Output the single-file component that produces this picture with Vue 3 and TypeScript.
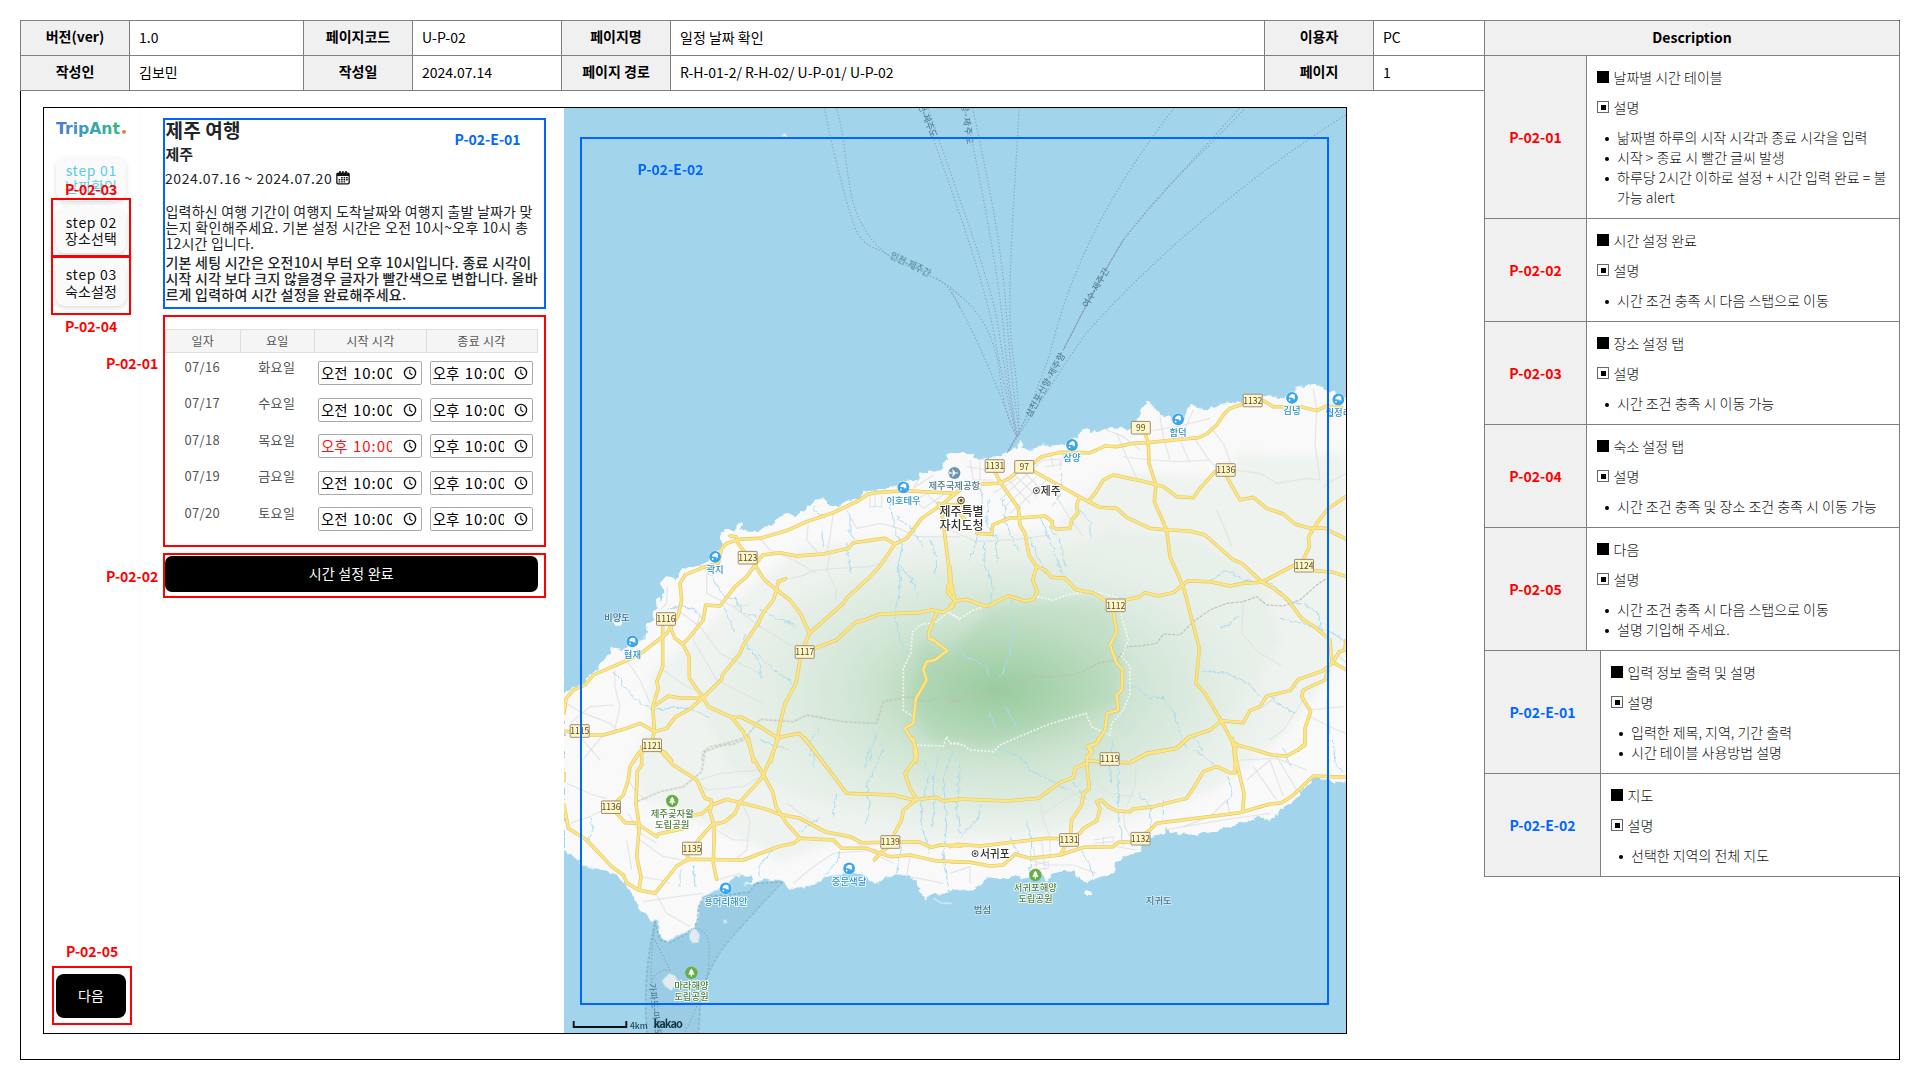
<script setup lang="ts">
interface Spec { code: string; title: string; items: string[]; edge?: boolean; height: number }
interface Line { o: 'N' | 'E' | 'S' | 'T' | 'U' | 'V'; d: string }
interface Label { x: number; y: number; t: string }

const metaRows: string[][] = [
  ['버전(ver)', '1.0', '페이지코드', 'U-P-02', '페이지명', '일정 날짜 확인', '이용자', 'PC'],
  ['작성인', '김보민', '작성일', '2024.07.14', '페이지 경로', 'R-H-01-2/ R-H-02/ U-P-01/ U-P-02', '페이지', '1'],
]

const specs: Spec[] = [
  { code: 'P-02-01', title: '날짜별 시간 테이블', height: 163, items: ['낢짜별 하루의 시작 시각과 종료 시각을 입력', '시작 > 종료 시 빨간 글씨 발생', '하루당 2시간 이하로 설정 + 시간 입력 완료 = 불가능 alert'] },
  { code: 'P-02-02', title: '시간 설정 완료', height: 103, items: ['시간 조건 충족 시 다음 스탭으로 이동'] },
  { code: 'P-02-03', title: '장소 설정 탭', height: 103, items: ['시간 조건 충족 시 이동 가능'] },
  { code: 'P-02-04', title: '숙소 설정 탭', height: 103, items: ['시간 조건 충족 및 장소 조건 충족 시 이동 가능'] },
  { code: 'P-02-05', title: '다음', height: 123, items: ['시간 조건 충족 시 다음 스탭으로 이동', '설명 기입해 주세요.'] },
  { code: 'P-02-E-01', title: '입력 정보 출력 및 설명', height: 123, edge: true, items: ['입력한 제목, 지역, 기간 출력', '시간 테이블 사용방법 설명'] },
  { code: 'P-02-E-02', title: '지도', height: 103, edge: true, items: ['선택한 지역의 전체 지도'] },
]

const steps = [
  { n: 'step 01', t: '날짜확인', on: true },
  { n: 'step 02', t: '장소선택', on: false },
  { n: 'step 03', t: '숙소설정', on: false },
]

const days = [
  { d: '07/16', w: '화요일', s: '오전', bad: false },
  { d: '07/17', w: '수요일', s: '오전', bad: false },
  { d: '07/18', w: '목요일', s: '오후', bad: true },
  { d: '07/19', w: '금요일', s: '오전', bad: false },
  { d: '07/20', w: '토요일', s: '오전', bad: false },
]

/* Map tiles: each tile has its own origin and is drawn at three units per pixel. */
const origin: Record<Line['o'], string> = {
  N: 'translate(560 440) scale(.33333)',
  E: 'translate(950 400) scale(.33333)',
  S: 'translate(560 740) scale(.33333)',
  T: 'translate(950 740) scale(.33333)',
  U: 'translate(560 100) scale(.33333)',
  V: 'translate(950 100) scale(.33333)',
}

const land: Line[] = [
  { o: 'N', d: '12,760 30,745 62,736 78,722 90,700 115,690 125,660 150,640 152,620 180,630 210,620 240,600 262,585 266,562 258,550 280,535 275,515 290,505 288,478 300,470 303,490 310,460 303,425 318,412 350,418 362,390 385,382 430,375 450,355 480,330 485,305 480,285 495,268 515,268 528,272 530,255 550,250 538,264 560,275 590,275 620,260 645,250 655,230 680,222 710,225 735,210 765,180 790,175 800,182 800,195 830,200 850,185 905,172 910,155 950,155 1000,140 1040,122 1080,118 1078,95 1100,98 1150,85 1152,62 1175,45 1200,38 1240,40 1240,970 12,970' },
  { o: 'E', d: '-10,165 0,160 30,160 50,176 80,177 105,172 150,168 175,155 205,140 208,122 218,126 218,142 235,150 250,148 280,130 305,140 340,135 380,112 385,100 410,84 440,97 480,85 520,80 530,92 545,85 560,60 575,30 590,5 600,12 620,28 635,45 660,50 685,75 705,55 712,25 722,15 740,18 760,30 790,20 860,5 890,0 940,-8 950,-12 1000,-5 1035,-25 1040,-42 1060,-40 1080,-48 1110,-42 1125,-30 1150,-25 1165,-10 1200,0 1200,1060 -10,1060' },
  { o: 'S', d: '12,330 50,355 65,372 100,387 165,400 195,430 215,455 220,480 240,500 250,520 275,545 295,538 300,590 325,608 345,590 380,575 405,560 415,530 415,500 430,470 470,450 520,415 545,405 570,408 575,425 550,435 580,430 610,420 660,420 685,445 740,440 770,430 800,410 840,405 865,395 905,402 945,435 980,412 1020,403 1050,410 1070,430 1095,478 1115,465 1150,462 1180,450 1215,452 1215,-10 12,-10' },
  { o: 'T', d: '0,455 30,450 60,452 90,440 110,408 150,418 200,405 215,418 240,412 275,400 290,430 305,398 330,392 375,395 385,415 410,430 440,415 490,400 495,370 520,350 570,335 572,305 600,290 640,280 648,262 660,275 710,285 800,275 850,255 900,240 930,228 960,242 985,225 990,205 1030,185 1060,150 1090,115 1130,120 1180,128 1200,125 1200,-100 0,-100' },
  { o: 'N', d: '152,545 162,550 170,558 182,556 190,545 185,535 160,538' },
  { o: 'T', d: '403,455 412,450 425,457 423,465 408,464' },
  { o: 'U', d: '668,104 676,101 683,108 675,111' },
]

const roads: Line[] = [
  { o: 'N', d: '12,820 18,775 40,750 75,735 100,705 215,655 250,635 320,580 355,525 365,480 360,430 375,405 435,380 475,370 485,325 500,310 540,298 600,295 680,272 740,245 820,218 890,185 925,162 960,157 1040,152 1180,160' },
  { o: 'N', d: '510,288 528,290 535,312 585,375 612,418 650,450 690,480 722,522 748,580' },
  { o: 'N', d: '308,560 308,680 290,725 295,745 278,800 283,870 275,915' },
  { o: 'N', d: '330,560 345,595 368,612 388,650 388,715 428,772 445,800 515,832 550,875 570,920 580,965' },
  { o: 'N', d: '368,612 390,590 430,540 437,495 480,498 525,440 560,410 585,375 608,345 660,338 710,348 790,342 865,325 880,308 975,295 1005,312' },
  { o: 'N', d: '677,416 655,425 650,450 640,480 605,525 595,550 550,615 540,640 487,705 485,718 430,772 390,807 345,832 320,865 285,875 240,850 200,865 130,885 90,885 12,873' },
  { o: 'N', d: '280,800 325,768 365,775 430,775' },
  { o: 'N', d: '1202,148 1150,190 1085,235 1040,295 1005,312 960,378 930,410 860,475 850,490 748,580 733,615 720,660 708,730 675,790 665,830 652,895 632,965' },
  { o: 'N', d: '765,625 830,600 885,548 915,540 960,522 1080,518 1115,510 1150,517 1178,500 1185,482 1162,458 1165,435 1178,440 1172,460 1165,370 1155,290 1145,210 1135,190' },
  { o: 'N', d: '1130,518 1105,580 1108,597 1120,600 1162,632 1125,660 1100,665 1090,688 1100,720 1068,775 1060,850 1035,865 1065,915 1063,935 1070,965' },
  { o: 'N', d: '515,832 545,832 600,860 652,893 718,880 750,915 788,965' },
  { o: 'N', d: '275,915 240,935 220,965' },
  { o: 'N', d: '300,930 315,938 335,962' },
  { o: 'N', d: '1135,193 1202,195' },
  { o: 'E', d: '0,292 30,270' },
  { o: 'E', d: '95,252 150,250 185,230 200,215 250,190 275,170 330,157 420,158 440,150 465,138 500,140 550,130 590,128 700,117 745,113 770,102 800,75 820,45 840,25 880,12' },
  { o: 'E', d: '940,2 970,20 1050,20 1100,32 1130,18 1175,22' },
  { o: 'E', d: '250,213 415,305 450,322 500,325 530,352 600,385 650,390 720,393 765,405 850,480 875,490 935,545 970,565 1010,595 1055,655 1100,685 1140,720 1145,785 1190,810' },
  { o: 'E', d: '415,305 435,280 460,240 490,225 575,243 610,252 640,260 680,290 730,293 750,265 795,215' },
  { o: 'E', d: '830,230 870,300 910,292 950,325 1000,342 1035,372 1080,385 1120,383 1190,418' },
  { o: 'E', d: '585,100 595,128 597,190 618,255 613,305 650,390 660,470 700,560 748,745 738,850 765,880 815,965 850,1030 855,1085' },
  { o: 'E', d: '135,215 150,245 205,325 210,375 225,400 237,465 260,500 285,510 305,532 345,535 380,570 430,578 470,605' },
  { o: 'E', d: '525,600 565,592 585,578 625,588 670,578 715,542 780,545 840,558 880,550 935,547 1030,497' },
  { o: 'E', d: '1062,475 1078,440 1075,412 1100,370 1135,325 1190,288' },
  { o: 'E', d: '1095,512 1150,517 1190,530' },
  { o: 'E', d: '260,500 248,540 262,575 250,598 225,603 175,588 135,607 120,617 100,617 50,598 15,603 0,620' },
  { o: 'E', d: '0,500 5,560 15,603' },
  { o: 'E', d: '80,400 125,403 128,375 180,353 215,353 285,348 307,365 307,380 320,388 360,385 365,360 383,340 380,315 388,293' },
  { o: 'E', d: '490,635 500,695 480,735 500,790 518,808 515,870 500,885 505,930 472,940 465,990 440,1030 412,1040 425,1058 410,1075' },
  { o: 'E', d: '545,1085 590,1062 680,1045 715,1012 780,990 815,962 880,968 900,932 930,920 950,888 1020,872 1045,838 1120,812 1150,785 1168,755 1185,750 1187,722' },
  { o: 'E', d: '1135,810 1125,840 1060,870 1055,890 1082,935 1065,985 1065,1030 1045,1050' },
  { o: 'E', d: '30,340 45,360' },
  { o: 'S', d: '12,100 12,122' },
  { o: 'S', d: '12,195 25,265 80,300 155,380 190,405 200,428 235,450 285,460 350,378 385,358 550,360 655,320 700,310 720,295 820,300 845,325 920,325 990,350 1050,345 1125,362 1205,366' },
  { o: 'S', d: '250,30 235,40 210,80 205,120 190,165 165,190 165,215 195,248 230,250 290,290 295,282 375,265' },
  { o: 'S', d: '400,225 425,222 455,195 500,178 550,190 620,208 655,222 720,235 795,275 870,290 905,308 1075,305 1115,322 1140,315 1205,318' },
  { o: 'S', d: '245,20 245,75 232,95 228,190 238,260 230,350 243,410 237,450' },
  { o: 'S', d: '300,30 340,75 410,120 435,175 453,180 455,195 450,215 463,260 460,370 470,418' },
  { o: 'S', d: '383,360 383,340 415,300 455,255 495,245 525,220 540,185 605,115 630,60 655,-5' },
  { o: 'S', d: '565,-5 578,50 610,105 638,155 648,200 680,250 718,293' },
  { o: 'S', d: '735,-5 860,160 1000,165 1060,180 1130,172 1150,183 1205,178' },
  { o: 'S', d: '1060,-5 1072,50 1035,100 1050,145 1070,178 1030,210 1025,240 1003,280' },
  { o: 'S', d: '943,360 965,335 1000,310' },
  { o: 'T', d: '0,180 30,177 170,183 265,175 330,128 370,112 375,85 412,68' },
  { o: 'T', d: '412,62 450,65 540,68 590,40 680,25 715,-5' },
  { o: 'T', d: '445,-5 440,12 415,18 428,35 410,50 412,90 418,145 400,160 395,195 365,240 360,300' },
  { o: 'T', d: '350,310 332,343' },
  { o: 'T', d: '0,320 20,313 90,318 290,295 350,297 390,280 400,265 440,243 450,205 440,185 455,180 475,200 500,213 540,215 548,207 610,200 680,182 710,175 730,145 760,95 800,80 840,98 855,98' },
  { o: 'T', d: '0,365 60,367 120,378 160,375 195,342 240,355 330,345 400,322 490,320 505,307 550,305 600,270 620,250 870,218 960,192 995,188 1030,165 1090,108 1190,112' },
  { o: 'T', d: '847,-5 865,90 882,160 878,215' },
  { o: 'T', d: '857,10 855,98' },
  { o: 'T', d: '850,12 910,28 965,45 1010,48 1048,27 1065,15 1066,-5' },
]

const lanes: Line[] = [
  { o: 'N', d: '600,295 630,330 700,360 770,400' }, { o: 'N', d: '420,520 400,600 470,720 610,790' },
  { o: 'N', d: '440,400 440,460 520,500 570,495' }, { o: 'N', d: '820,220 810,290 800,340' },
  { o: 'N', d: '745,250 740,300 780,345' }, { o: 'N', d: '650,420 720,410 760,392 830,385 930,380 990,360' },
  { o: 'N', d: '810,345 800,390 830,450 825,480' }, { o: 'N', d: '860,210 890,265 960,250 1010,262 1070,290 1200,290' },
  { o: 'N', d: '20,790 60,815 150,850 170,870' }, { o: 'N', d: '165,690 165,740 180,800 165,865' },
  { o: 'N', d: '30,850 90,800 160,795' }, { o: 'N', d: '200,660 240,720 270,790' },
  { o: 'N', d: '340,500 420,560 480,640 600,700' }, { o: 'N', d: '120,960 60,890 20,870' },
  { o: 'N', d: '300,510 320,490 322,440' }, { o: 'N', d: '930,165 930,200 965,200 965,165' }, { o: 'N', d: '945,165 945,200' },
  { o: 'N', d: '1050,165 1090,205 1150,165' }, { o: 'N', d: '1070,180 1100,160 1140,200' }, { o: 'N', d: '1080,110 1060,145 1120,105' },
  { o: 'N', d: '520,500 600,560 700,620' }, { o: 'N', d: '310,690 380,740 430,760' }, { o: 'N', d: '130,885 100,920 70,958' },
  { o: 'E', d: '150,300 240,215 300,160' }, { o: 'E', d: '165,320 260,230' }, { o: 'E', d: '180,340 290,240' }, { o: 'E', d: '130,280 200,235' },
  { o: 'E', d: '175,240 240,310' }, { o: 'E', d: '195,225 260,290' }, { o: 'E', d: '215,210 280,275' }, { o: 'E', d: '160,270 215,325' },
  { o: 'E', d: '60,180 70,240 130,240' }, { o: 'E', d: '50,200 110,210' }, { o: 'E', d: '90,180 90,240' },
  { o: 'E', d: '280,180 330,178 330,195 285,200' }, { o: 'E', d: '300,160 310,200' }, { o: 'E', d: '340,160 330,210' },
  { o: 'E', d: '0,390 80,425 200,418 300,405' }, { o: 'E', d: '320,290 350,340 400,410' },
  { o: 'E', d: '500,100 530,170 560,235' }, { o: 'E', d: '520,170 600,180 690,185 780,180' }, { o: 'E', d: '550,95 620,90 700,75 780,55' },
  { o: 'E', d: '630,50 640,110 660,180' }, { o: 'E', d: '730,30 690,120 720,190' }, { o: 'E', d: '470,90 520,110 570,150' },
  { o: 'E', d: '730,110 770,170 800,205' }, { o: 'E', d: '780,80 820,130 850,210' }, { o: 'E', d: '800,330 830,400 845,440' },
  { o: 'E', d: '850,210 930,220 980,250 1070,235 1110,240' }, { o: 'E', d: '1090,-35 1100,30 1095,130 1110,240' },
  { o: 'E', d: '1190,220 1150,240 1120,260' }, { o: 'E', d: '880,600 875,700 930,760 1000,800' },
  { o: 'E', d: '940,920 990,880 1040,860' }, { o: 'E', d: '960,1020 1000,990 1060,900' }, { o: 'E', d: '1080,930 1180,920' }, { o: 'E', d: '1080,950 1160,990 1190,1000' },
  { o: 'E', d: '1130,900 1140,1000' }, { o: 'E', d: '1160,760 1190,790' },
  { o: 'S', d: '20,130 100,165 140,175' }, { o: 'S', d: '30,250 90,230 140,205' }, { o: 'S', d: '260,180 230,160 200,110' },
  { o: 'S', d: '205,220 240,280 290,310' }, { o: 'S', d: '240,300 310,350 370,360' }, { o: 'S', d: '240,410 300,420 330,430' },
  { o: 'S', d: '250,485 350,470 430,460' }, { o: 'S', d: '290,465 320,520 390,560' }, { o: 'S', d: '420,120 480,100 600,90' },
  { o: 'S', d: '200,300 215,390' }, { o: 'S', d: '400,110 440,150 550,140 600,110' }, { o: 'S', d: '470,270 520,300 560,300' },
  { o: 'S', d: '545,190 570,240 560,330 530,355' }, { o: 'S', d: '680,190 750,240 760,260' }, { o: 'S', d: '700,430 760,380 820,340 950,330' },
  { o: 'S', d: '1050,350 1040,410' }, { o: 'S', d: '1050,410 1150,430' }, { o: 'S', d: '890,310 950,345 1000,370' }, { o: 'S', d: '470,420 540,400' },
  { o: 'T', d: '240,360 290,375 370,375 440,400' }, { o: 'T', d: '250,320 260,385' }, { o: 'T', d: '275,305 285,390' }, { o: 'T', d: '300,300 300,345' },
  { o: 'T', d: '250,375 295,365 295,385 250,388' }, { o: 'T', d: '430,300 490,290 490,315' }, { o: 'T', d: '430,310 490,305' }, { o: 'T', d: '460,290 460,318' },
  { o: 'T', d: '440,130 480,160 550,170' }, { o: 'T', d: '330,130 400,180' }, { o: 'T', d: '280,220 350,175 400,150' }, { o: 'T', d: '270,190 280,240 300,290' },
  { o: 'T', d: '560,40 555,140 530,200' }, { o: 'T', d: '640,270 700,260 850,235 960,220' }, { o: 'T', d: '700,260 780,230 830,180 840,220' },
  { o: 'T', d: '870,60 980,55 1070,90' }, { o: 'T', d: '890,120 960,60 1000,170' }, { o: 'T', d: '910,80 980,180' }, { o: 'T', d: '980,50 1040,150' }, { o: 'T', d: '0,400 60,380 60,430' },
  { o: 'T', d: '520,215 525,260 540,290' }, { o: 'T', d: '500,320 560,330' },
]

const streams: Line[] = [
  { o: 'N', d: '440,390 470,430 490,470 530,480 545,520 590,530 600,560' }, { o: 'N', d: '480,480 510,540 520,575' },
  { o: 'N', d: '550,580 560,620 590,650 605,710' }, { o: 'N', d: '590,640 640,690 700,730' }, { o: 'N', d: '600,510 660,540 710,560' },
  { o: 'N', d: '765,195 765,215 795,235' }, { o: 'N', d: '870,220 870,280 885,300' }, { o: 'N', d: '860,310 865,355 875,400' },
  { o: 'N', d: '990,190 1005,270 1030,320 1015,370 1020,440 1005,540 1020,600 1040,640' }, { o: 'N', d: '1010,230 1060,270 1090,320' },
  { o: 'N', d: '1110,300 1130,350 1125,400' }, { o: 'N', d: '1015,370 1060,430 1075,470' }, { o: 'N', d: '165,695 190,740 240,790 290,810 370,800 450,830' },
  { o: 'N', d: '780,865 745,910 755,950' }, { o: 'N', d: '950,880 935,920 930,960' }, { o: 'N', d: '320,510 360,495 400,510 430,540' }, { o: 'N', d: '785,270 790,320' },
  { o: 'E', d: '85,250 100,290 80,360 80,420 60,480' }, { o: 'E', d: '115,300 110,370 140,420 140,490' }, { o: 'E', d: '100,430 105,500 130,560 120,610' },
  { o: 'E', d: '160,300 170,380 205,450' }, { o: 'E', d: '240,410 260,470 290,520' }, { o: 'E', d: '270,350 300,420 320,480 350,540' },
  { o: 'E', d: '300,380 330,420 345,500' }, { o: 'E', d: '185,600 180,640 190,700 180,760 150,835' }, { o: 'E', d: '0,745 60,775 110,800 120,830' },
  { o: 'E', d: '530,855 570,870 600,895 640,895 670,930 690,1000 710,1040' }, { o: 'E', d: '740,812 830,820 890,845 930,890' },
  { o: 'E', d: '780,545 820,515 850,520 880,540 960,550 1000,580' }, { o: 'E', d: '1000,600 1060,610 1105,640 1110,680' }, { o: 'E', d: '990,655 1060,670 1130,690 1190,725' },
  { o: 'E', d: '960,890 1000,920 1035,940' }, { o: 'E', d: '335,220 330,280 310,320' }, { o: 'E', d: '390,330 420,370 420,410' }, { o: 'E', d: '120,930 140,1000' }, { o: 'E', d: '165,920 200,980' },
  { o: 'E', d: '730,1010 760,1050' }, { o: 'E', d: '810,680 840,675 865,645' },
  { o: 'S', d: '970,20 950,80 920,130 930,210 915,250' }, { o: 'S', d: '930,20 915,80' }, { o: 'S', d: '1090,60 1110,110 1085,180 1085,260 1110,340' },
  { o: 'S', d: '1140,40 1120,110 1125,180 1115,260' }, { o: 'S', d: '1175,40 1150,120 1160,250 1150,360 1165,440' }, { o: 'S', d: '775,235 740,260 720,280' },
  { o: 'S', d: '640,330 600,370 600,410' }, { o: 'S', d: '840,330 830,370 790,405' }, { o: 'S', d: '1025,320 1015,370 1010,400' }, { o: 'S', d: '90,235 100,270 80,310' },
  { o: 'S', d: '360,390 360,440' }, { o: 'S', d: '400,380 405,440' }, { o: 'S', d: '760,20 765,80' }, { o: 'S', d: '600,0 660,20 690,30' }, { o: 'S', d: '1200,60 1190,200 1200,280' }, { o: 'S', d: '830,160 820,230' },
  { o: 'T', d: '140,20 210,50 240,90 300,120 350,150' }, { o: 'T', d: '95,190 80,240 30,290' }, { o: 'T', d: '490,0 480,50 485,130' }, { o: 'T', d: '510,50 505,110 505,230 520,320' },
  { o: 'T', d: '565,160 600,200 605,270' }, { o: 'T', d: '640,180 640,240' }, { o: 'T', d: '370,130 410,180' }, { o: 'T', d: '230,240 245,300 240,400' }, { o: 'T', d: '390,330 420,370 430,410' },
  { o: 'T', d: '830,110 850,150 830,190' }, { o: 'T', d: '1150,0 1155,70 1180,95' }, { o: 'T', d: '730,30 790,70' }, { o: 'T', d: '1000,20 1020,80' }, { o: 'T', d: '180,290 210,350' },
]

const park: Line[] = [
  { o: 'N', d: '1200,540 1165,515 1130,545 1080,555 1058,575 1052,640 1030,685 1030,810 1060,830' },
  { o: 'N', d: '1070,915 1150,918 1160,890 1170,910 1202,910' },
  { o: 'E', d: '0,640 30,655 70,630 110,618' },
  { o: 'E', d: '262,590 310,600 350,585 430,572 500,592 515,650 535,720 515,770 540,800 540,880 520,930 485,970 480,1005 425,980 408,940 290,975 150,1035 130,1055 60,1050 40,1035 0,1030' },
]

const district: Line[] = [
  { o: 'N', d: '425,962 430,935 450,920 500,910 560,890 600,838 700,845 740,825 850,845 950,850 970,785 1050,770 1100,785 1140,768 1202,790' },
  { o: 'E', d: '0,910 50,890 130,880 190,860 240,828 300,832 380,822 450,788 500,780 530,740 570,738 620,730 640,702 690,705 730,665 780,630 830,610 880,605 920,590 950,615 1000,618 1050,600 1100,555 1130,535' },
  { o: 'S', d: '550,0 520,12 480,18 435,35 425,95 370,140 300,155 230,185' },
]

const ferries: Line[] = [
  { o: 'U', d: '793,25 C810,110 840,240 872,345 S930,430 985,465' },
  { o: 'U', d: '828,25 C850,80 855,180 868,250 C880,350 930,430 990,468 C1040,505 1150,530 1202,590' },
  { o: 'U', d: '1130,535 Q1175,560 1202,628' },
  { o: 'V', d: '0,567 C90,620 140,720 150,830 Q165,950 200,1010' },
  { o: 'V', d: '5,580 Q90,720 195,1000' },
  { o: 'V', d: '-65,25 C20,280 100,480 140,650 Q170,850 200,1010' },
  { o: 'V', d: '-82,25 C0,260 90,500 130,690 Q165,880 202,1010' },
  { o: 'V', d: '45,25 C100,280 140,500 160,680 Q180,900 203,1010' },
  { o: 'V', d: '68,25 C120,270 155,430 170,650 Q185,850 208,1000' },
  { o: 'V', d: '207,25 C200,200 165,600 187,750 Q210,900 205,1000' },
  { o: 'V', d: '672,25 C450,310 350,550 300,760 Q250,900 205,1005' },
  { o: 'V', d: '868,25 C740,170 640,270 520,420 Q440,550 340,750 L172,1058' },
  { o: 'V', d: '882,28 C740,180 640,260 520,420 Q440,550 340,750' },
  { o: 'V', d: '1187,45 C900,225 600,480 400,710 Q300,860 172,1058' },
  { o: 'S', d: '285,545 Q270,660 275,740 L295,880' },
  { o: 'S', d: '285,600 L330,690 Q280,690 275,730' },
  { o: 'S', d: '405,565 Q450,570 448,640 T430,750 Q400,830 372,880' },
]

const shields: Label[] = [
  { x: 666, y: 619, t: '1116' }, { x: 804.7, y: 652, t: '1117' }, { x: 747.7, y: 557.7, t: '1123' }, { x: 579.7, y: 731, t: '1115' },
  { x: 652, y: 745.3, t: '1121' }, { x: 994.7, y: 466, t: '1131' }, { x: 1024.2, y: 466.8, t: '97' }, { x: 1140.8, y: 427.7, t: '99' },
  { x: 1225.7, y: 470, t: '1136' }, { x: 1252.7, y: 400.5, t: '1132' }, { x: 1304, y: 565.7, t: '1124' }, { x: 1115.7, y: 605.3, t: '1112' },
  { x: 1109.7, y: 759, t: '1119' }, { x: 611, y: 807.2, t: '1136' }, { x: 692, y: 848.5, t: '1135' }, { x: 890.3, y: 842, t: '1139' },
  { x: 1069, y: 840, t: '1131' }, { x: 1140.5, y: 838.7, t: '1132' },
]

const beaches: Label[] = [
  { x: 903.4, y: 487.3, t: '이호테우' }, { x: 715.1, y: 556.8, t: '곽지' }, { x: 632.4, y: 641.4, t: '협재' }, { x: 1072, y: 445, t: '삼양' },
  { x: 1178.1, y: 419.3, t: '함덕' }, { x: 1292, y: 397.8, t: '김녕' }, { x: 1338.4, y: 399.5, t: '월정리' }, { x: 849.1, y: 868.4, t: '중문색달' }, { x: 725.7, y: 888.4, t: '용머리해안' },
]

const parks = [
  { x: 672.2, y: 801, a: '제주곶자왈', b: '도립공원' },
  { x: 691.4, y: 972.8, a: '마라해양', b: '도립공원' },
  { x: 1035.4, y: 875, a: '서귀포해양', b: '도립공원' },
]

const islets: Label[] = [
  { x: 617, y: 617, t: '비양도' }, { x: 982.4, y: 909.7, t: '범섬' }, { x: 1158.8, y: 900.7, t: '지귀도' },
]

const ferryNames = [
  { x: 910.5, y: 264.5, r: 26, t: '인천-제주간', w: 44 },
  { x: 1096, y: 287.7, r: -60, t: '여수-제주간', w: 44 },
  { x: 1045.5, y: 385, r: -61, t: '삼천포신항-제주항', w: 72 },
  { x: 967, y: 124, r: 82, t: '항-제주도', w: 41 },
  { x: 926, y: 117, r: 68, t: '인천-제주도', w: 44 },
  { x: 655, y: 1010, r: 83, t: '가파도-마라도', w: 54 },
]
</script>

<template>
  <div class="sheet">
    <div class="main">
      <div class="meta">
        <div v-for="(row, i) in metaRows" :key="i" class="meta-row">
          <div v-for="(c, j) in row" :key="j" :class="j % 2 ? 'value' : 'label'">{{ c }}</div>
        </div>
      </div>

      <div class="stage">
        <div class="screen">
          <nav class="nav">
            <svg class="logo" width="72" height="20" viewBox="0 0 72 20">
              <defs>
                <linearGradient id="brand" x1="0" x2="1" y1="0" y2="0">
                  <stop offset="0" stop-color="#4a74d6" /><stop offset=".5" stop-color="#3c9fc0" /><stop offset="1" stop-color="#33bd7e" />
                </linearGradient>
              </defs>
              <text x="0" y="12.500" textLength="64" lengthAdjust="spacingAndGlyphs" fill="url(#brand)">TripAnt</text>
              <circle cx="68" cy="10.800" r="1.900" fill="#f2703c" />
            </svg>
            <div v-for="s in steps" :key="s.n" class="step" :class="{ on: s.on }">
              <span class="no">{{ s.n }}</span><span>{{ s.t }}</span>
            </div>
            <div class="next">다음</div>
          </nav>

          <section class="panel">
            <h1>제주 여행</h1>
            <h2>제주</h2>
            <div class="period">
              <span>2024.07.16 ~ 2024.07.20</span>
              <svg width="14" height="14" viewBox="0 0 14 14">
                <path d="M2 1.500h1.200V0h1.600v1.500h1.400V0h1.400v1.500h1.600V0h1.600v1.500H12a1.800 1.800 0 0 1 1.800 1.800v8.400A1.800 1.800 0 0 1 12 13.500H2a1.800 1.800 0 0 1-1.800-1.800V3.300A1.800 1.800 0 0 1 2 1.500z" fill="#111" />
                <path d="M1.500 5h11v6.600a.7.7 0 0 1-.7.7H2.200a.7.7 0 0 1-.7-.7z" fill="#fff" />
                <path d="M5.100 6.700h6.700M2.600 8.800h9.200M2.600 10.900h6.700" stroke="#111" stroke-width="1.400" stroke-dasharray="1.600 .9" />
              </svg>
            </div>
            <div class="guide">
              <p>입력하신 여행 기간이 여행지 도착날짜와 여행지 출발 날짜가 맞</p>
              <p class="wide">는지 확인해주세요. 기본 설정 시간은 오전 10시~오후 10시 총</p>
              <p>12시간 입니다.</p>
            </div>
            <div class="guide strong">
              <p>기본 세팅 시간은 오전10시 부터 오후 10시입니다. 종료 시각이</p>
              <p>시작 시각 보다 크지 않을경우 글자가 빨간색으로 변합니다. 올바</p>
              <p>르게 입력하여 시간 설정을 완료해주세요.</p>
            </div>
            <div class="times">
              <div class="tr th"><span>일자</span><span>요일</span><span>시작 시각</span><span>종료 시각</span></div>
              <div v-for="d in days" :key="d.d" class="tr">
                <span>{{ d.d }}</span><span>{{ d.w }}</span>
                <div v-for="k in 2" :key="k" class="cell">
                  <div class="input" :class="{ bad: d.bad && k === 1 }">
                    <b>{{ k === 1 ? d.s : '오후' }} <i>10:00</i></b>
                    <svg width="14" height="14" viewBox="0 0 14 14" fill="none" stroke="#111" stroke-width="1.400"><circle cx="7" cy="7" r="5.600" /><path d="M6.800 3.600v3.700l2.500 1.700" stroke-width="1.100" /></svg>
                  </div>
                </div>
              </div>
            </div>
            <div class="done">시간 설정 완료</div>
          </section>

          <svg class="map" width="782" height="925" viewBox="564 108 782 925">
            <defs>
              <radialGradient id="peak" cx=".5" cy=".5" r=".5">
                <stop offset="0" stop-color="#9ccda1" /><stop offset=".13" stop-color="#aad4ae" /><stop offset=".3" stop-color="#bddcc1" />
                <stop offset=".48" stop-color="#d0e5d4" /><stop offset=".72" stop-color="#dfece2" /><stop offset="1" stop-color="#e8f0ea" stop-opacity="0" />
              </radialGradient>
              <filter id="soft" x="-10%" y="-10%" width="120%" height="120%"><feGaussianBlur stdDeviation="4" /></filter>
              <filter id="coast" x="0" y="0" width="100%" height="100%">
                <feTurbulence type="fractalNoise" baseFrequency=".16" numOctaves="2" seed="4" />
                <feDisplacementMap in="SourceGraphic" scale="6" xChannelSelector="R" yChannelSelector="G" />
              </filter>
              <g id="beach">
                <circle r="6.400" fill="#fff" opacity=".6" /><circle r="5.900" fill="#3aa5e9" />
                <path d="M-3.200-.2A3.600 3.600 0 0 1 2.700-2.800L3.100 1.500 1.300 0l.5 2.400L.4 0-3.200-.2z" fill="#fff" />
                <circle cx="-2.400" cy="2.200" r=".9" fill="#fff" />
              </g>
              <g id="tree"><circle r="6.200" fill="#69ad45" /><path d="M0-4.200L2.300-1H1.500L3.200 1.800H.6V3.800H-.6V1.800H-3.200L-1.500-1H-2.300z" fill="#fff" /></g>
            </defs>
            <rect x="564" y="108" width="782" height="925" fill="#a2d5eb" />
            <g filter="url(#coast)" fill="#f9f9f9">
              <polygon v-for="(l, i) in land" :key="i" :points="l.d" :transform="origin[l.o]" />
            </g>
            <g filter="url(#soft)">
              <path d="M650 673L700 632 735 600 765 575 800 548 877 538 960 534 1050 530 1090 490 1110 472 1217 477 1240 453 1297 457 1346 452V650L1317 693 1283 737 1217 787 1183 800 1083 820 1050 833 950 840 927 848 843 840 780 862 755 845 700 822 643 800 630 770 650 720z" fill="#eef3ef" />
              <path d="M700 700L735 650 800 600 880 568 970 570 1040 560 1110 530 1200 540 1260 580 1280 640 1240 700 1190 750 1080 790 950 812 820 800 730 770z" fill="#e8f0ea" />
            </g>
            <ellipse cx="998" cy="690" rx="290" ry="160" fill="url(#peak)" />
            <path d="M920 640L950 655 990 606 1040 602 1095 595 1118 610 1124 660 1115 705 1085 712 1040 728 990 745 930 740 910 705z" fill="#8fc896" opacity=".2" filter="url(#soft)" />

            <g fill="none" stroke="#dfe1e0" stroke-opacity=".8" stroke-width="3.600" stroke-linejoin="round">
              <polyline v-for="(l, i) in lanes" :key="i" :points="l.d" :transform="origin[l.o]" />
            </g>
            <g fill="none" stroke="#a9dbef" stroke-width="3" stroke-linejoin="round" filter="url(#coast)">
              <polyline v-for="(l, i) in streams" :key="i" :points="l.d" :transform="origin[l.o]" />
            </g>
            <g fill="none" stroke="#bdbfb0" stroke-width="3.400" stroke-dasharray="9 4">
              <polyline v-for="(l, i) in district" :key="i" :points="l.d" :transform="origin[l.o]" />
            </g>
            <g fill="none" stroke="#f4faf4" stroke-width="5" stroke-dasharray="6 5" opacity=".9">
              <polyline v-for="(l, i) in park" :key="i" :points="l.d" :transform="origin[l.o]" />
            </g>

            <g :transform="origin.S">
              <path d="M285 545L300 600 330 608 400 570 412 540 415 500 430 470 520 462 570 455 585 430 670 425Q600 495 500 610 430 700 420 800L415 885H262Q245 720 285 545z" fill="#7fb3d0" fill-opacity=".22" stroke="#6a9fae" stroke-width="3" stroke-dasharray="8 6" />
              <path d="M390 575l15-12 14 22-4 22-18 2-9-14zM306 722l22-22 18 8 12 22-16 10-8 12-20-14z" fill="#e3ebf0" />
              <path d="M490 540h10v9h-9z" fill="#e3ebf0" />
              <path d="M1120 475l25 15h30" fill="none" stroke="#eef5f8" stroke-width="3" />
            </g>

            <g fill="none" stroke="#e3c665" stroke-width="10.500" stroke-linejoin="round" stroke-linecap="round">
              <polyline v-for="(l, i) in roads" :key="i" :points="l.d" :transform="origin[l.o]" />
            </g>
            <g fill="none" stroke="#fbe584" stroke-width="7" stroke-linejoin="round" stroke-linecap="round">
              <polyline v-for="(l, i) in roads" :key="i" :points="l.d" :transform="origin[l.o]" />
            </g>
            <g fill="none" stroke="#8a98ba" stroke-width="3.600" stroke-dasharray="4 6" opacity=".8">
              <path v-for="(l, i) in ferries" :key="i" :d="'M' + l.d" :transform="origin[l.o]" />
            </g>
            <path :transform="origin.V" d="M520 420Q440 550 340 750M205 1000L172 1058" fill="none" stroke="#8a98ba" stroke-width="3" opacity=".7" />

            <g class="ferry">
              <text v-for="f in ferryNames" :key="f.t" :transform="`translate(${f.x} ${f.y}) rotate(${f.r})`" y="3" :textLength="f.w">{{ f.t }}</text>
            </g>
            <g v-for="(s, i) in shields" :key="'s' + i" class="shield">
              <rect :x="s.x - 9.5" :y="s.y - 6.3" width="19" height="12.600" rx=".6" />
              <text :x="s.x" :y="s.y + 3.2">{{ s.t }}</text>
            </g>
            <g v-for="b in beaches" :key="b.t" class="beach">
              <use href="#beach" :x="b.x" :y="b.y" />
              <text :x="b.x" :y="b.y + 16.2">{{ b.t }}</text>
            </g>
            <g class="airport">
              <circle cx="954.400" cy="473" r="6" fill="#6c96ac" />
              <path d="M950.600 472.400h2.600l-1.300-3h1l2.600 3h2.100q1 .6 0 1.200h-2.100l-2.600 3h-1l1.300-3h-2.600l-.8 1h-.5V471.400h.5z" fill="#fff" />
              <text x="954.300" y="489.200">제주국제공항</text>
            </g>
            <g v-for="p in parks" :key="p.a" class="green">
              <use href="#tree" :x="p.x" :y="p.y" />
              <text :x="p.x" :y="p.y + 16.4">{{ p.a }}</text>
              <text :x="p.x" :y="p.y + 27.1">{{ p.b }}</text>
            </g>
            <g class="islet"><text v-for="t in islets" :key="t.t" :x="t.x" :y="t.y + 3.5">{{ t.t }}</text></g>
            <g class="city">
              <text x="1050.800" y="494.500">제주</text>
              <text x="994.800" y="857.500">서귀포</text>
              <text class="big" x="961.500" y="516.200">제주특별</text>
              <text class="big" x="961.500" y="529.600">자치도청</text>
            </g>
            <g fill="none" stroke="#444" stroke-width="1">
              <circle cx="1036.400" cy="490.600" r="3" fill="#fff" /><circle cx="1036.400" cy="490.600" r=".8" fill="#444" />
              <circle cx="975.100" cy="853.600" r="3" fill="#fff" /><circle cx="975.100" cy="853.600" r=".8" fill="#444" />
              <circle cx="961" cy="500.400" r="3.400" fill="#f8e69a" /><circle cx="961" cy="500.400" r="1" fill="#444" />
            </g>
            <path d="M573.700 1021v6h52.600v-6" fill="none" stroke="#111" stroke-width="1.900" />
            <text class="km" x="630" y="1029">4km</text>
            <text class="kakao" x="653.500" y="1028" textLength="29.500">kakao</text>
          </svg>
        </div>
      </div>
    </div>

    <aside class="desc">
      <div class="desc-head">Description</div>
      <div v-for="s in specs" :key="s.code" class="spec" :class="{ edge: s.edge }" :style="{ height: s.height + 'px' }">
        <div class="code">{{ s.code }}</div>
        <div class="body">
          <div class="line"><i class="sq"></i>{{ s.title }}</div>
          <div class="line"><i class="sq hollow"></i>설명</div>
          <ul><li v-for="t in s.items" :key="t">{{ t }}</li></ul>
        </div>
      </div>
    </aside>

    <div class="mark blue m-info"></div>
    <div class="mark blue m-map"></div>
    <div class="mark m-place"></div>
    <div class="mark m-stay"></div>
    <div class="mark m-table"></div>
    <div class="mark m-done"></div>
    <div class="mark m-next"></div>
    <div class="tag blue t-info">P-02-E-01</div>
    <div class="tag blue t-map">P-02-E-02</div>
    <div class="tag t-place">P-02-03</div>
    <div class="tag t-stay">P-02-04</div>
    <div class="tag t-table">P-02-01</div>
    <div class="tag t-done">P-02-02</div>
    <div class="tag t-next">P-02-05</div>
  </div>
</template>

<style>
html, body { background: #fff; overflow: hidden; }
</style>

<style scoped>
* { box-sizing: border-box; }
.sheet {
  position: relative; display: flex; width: 1880px; height: 1040px; margin: 20px;
  font-family: "Noto Sans CJK KR", "Noto Sans", sans-serif; font-size: 14px; color: #000;
}
.main { width: 1464px; display: flex; flex-direction: column; }
.meta { border: 1px solid #7f7f7f; border-width: 1px 0 0 1px; }
.meta-row { display: grid; grid-template-columns: 109px 174px 109px 149px 109px 594px 109px 110px; height: 35px; border-bottom: 1px solid #7f7f7f; }
.meta-row > div { border-right: 1px solid #7f7f7f; white-space: nowrap; }
.meta-row > div:last-child { border-right: 0; }
.label { background: #f0f0f0; font-weight: 700; text-align: center; line-height: 31px; }
.value { padding-left: 9px; line-height: 32px; }
.stage { flex: 1; border: 1px solid #000; border-width: 0 0 1px 1px; padding: 16px 0 0 22px; }
.screen { display: flex; width: 1304px; height: 927px; border: 1px solid #000; }

.nav { width: 96px; height: 925px; border-right: 1px solid #fafafa; padding: 13px 0 15px 12px; display: flex; flex-direction: column; }
.logo { margin-bottom: 16px; overflow: visible; }
.logo text { font: 700 15px "DejaVu Sans", sans-serif; }
.step { width: 70px; height: 44px; margin-bottom: 8.400px; border-radius: 9px; background: #fafafa; box-shadow: 0 2px 5px rgba(0,0,0,.14); display: flex; flex-direction: column; align-items: center; justify-content: center; color: #111; padding-bottom: 2px; }
.step span { font-size: 14px; line-height: 16.500px; letter-spacing: .1px; white-space: nowrap; }
.step .no { letter-spacing: .7px; margin-right: -.7px; }
.step.on { color: #5ccbe8; }
.next { margin-top: auto; width: 70px; height: 44px; border-radius: 8px; background: #000; color: #fff; text-align: center; line-height: 43px; font-size: 14px; }

.panel { width: 424px; padding: 10px 0 0 25px; color: #212529; }
.panel h1 { margin: 0; padding-left: .5px; font-size: 19px; font-weight: 700; line-height: 23px; letter-spacing: .2px; }
.panel h2 { margin: 0; padding-left: .5px; font-size: 15px; font-weight: 700; line-height: 26px; }
.period { display: flex; align-items: center; gap: 4px; height: 22px; font-size: 14px; letter-spacing: .58px; }
.period svg { margin-top: -1px; }
.guide { margin-top: 15px; letter-spacing: .21px; padding-left: .5px; }
.guide p { margin: 0; line-height: 15.800px; white-space: nowrap; }
.guide .wide { letter-spacing: .32px; }
.guide.strong { margin-top: 4px; font-weight: 500; letter-spacing: .23px; }
.times { margin-top: 26px; width: 372.500px; height: 206px; color: #555; font-size: 13px; }
.tr { display: grid; grid-template-columns: 74.500px 74.500px 111.700px 111.700px; height: 36.500px; text-align: center; line-height: 28px; }
.tr > span { letter-spacing: .3px; }
.th { height: 24px; border: 1px solid #dedede; background: #f5f5f5; line-height: 22px; font-size: 12px; grid-template-columns: 73.500px 74.500px 111.700px 110.700px; }
.th span + span { border-left: 1px solid #dedede; }
.cell { padding: 8.500px 4px 0; }
.input { height: 24px; border: 1px solid #aaa; border-radius: 2px; padding: 0 4px 0 2px; display: flex; align-items: center; justify-content: space-between; background: #fff; color: #000; }
.input b { width: 71px; overflow: hidden; font-weight: 400; font-size: 14.500px; line-height: 22px; white-space: nowrap; text-align: left; }
.input i { font-style: normal; font-size: 15px; letter-spacing: 1px; margin-left: 2px; }
.input.bad b { color: #f11; }
.done { width: 372.500px; height: 36px; margin-top: 21px; border-radius: 7px; background: #000; color: #fff; font-size: 14px; letter-spacing: .2px; line-height: 34px; text-align: center; }

.map { display: block; }
.map text { text-anchor: middle; font-size: 9.400px; paint-order: stroke; stroke-linejoin: round; }
.ferry text { fill: #47788c; font-size: 9px; }
.shield rect { fill: #fdf6c8; stroke: #a08a7c; stroke-width: 1; }
.map .shield text { fill: #5c4d28; font-size: 8.600px; }
.beach text { fill: #2b90cd; stroke: #fff; stroke-width: 1.600px; font-weight: 500; }
.airport text { fill: #48768d; stroke: #fff; stroke-width: 1.600px; font-weight: 500; }
.green text { fill: #4b7f3c; stroke: #fff; stroke-width: 1.600px; font-weight: 500; }
.islet text { fill: #45748a; stroke: #d7edf6; stroke-width: 1.400px; font-weight: 500; }
.map .city text { fill: #333; stroke: #fff; stroke-width: 2px; font-size: 10.800px; font-weight: 500; }
.map .city text.big { font-size: 12px; }
.map .km { fill: #28485a; font-size: 8.500px; text-anchor: start; font-weight: 500; }
.map .kakao { fill: #12303f; font-size: 11px; text-anchor: start; font-weight: 700; }

.desc { width: 416px; border: 1px solid #000; border-top-color: #7f7f7f; border-left: 0; border-width: 1px 1px 1px 0; }
.desc-head { height: 35px; border: 1px solid #7f7f7f; border-width: 0 1px 1px 1px; margin-right: -1px; background: #f0f0f0; font-weight: 700; text-align: center; line-height: 32px; }
.spec { display: flex; margin-right: -1px; border: 1px solid #7f7f7f; border-width: 0 1px 1px 1px; }
.code { width: 102px; border-right: 1px solid #7f7f7f; background: #f0f0f0; display: flex; align-items: center; justify-content: center; color: #f00; font-weight: 700; }
.edge .code { width: 116px; color: #0066ff; }
.body { flex: 1; padding: 11px 8px 0 10px; line-height: 20px; color: #111; font-weight: 300; }
.line { display: flex; align-items: center; margin-bottom: 10px; }
.sq { width: 12px; height: 12px; margin-right: 4.500px; background: #000; }
.sq.hollow { background: linear-gradient(#000, #000) center / 5px 5px no-repeat #fff; border: 1px solid #666; }
ul { margin: 0; padding-left: 20px; list-style: none; }
li { position: relative; word-break: break-all; }
li::before { content: ""; position: absolute; left: -12.500px; top: 9.500px; width: 4px; height: 4px; border-radius: 50%; background: #000; }

.mark { position: absolute; border: 2px solid #f00; }
.mark.blue { border-color: #0066ff; }
.m-info { left: 143px; top: 98px; width: 383px; height: 191px; }
.m-map { left: 560px; top: 117px; width: 749px; height: 868px; }
.m-place { left: 31px; top: 178px; width: 80px; height: 60px; }
.m-stay { left: 31px; top: 235px; width: 80px; height: 60px; }
.m-table { left: 143px; top: 295px; width: 383px; height: 232px; }
.m-done { left: 143px; top: 533px; width: 383px; height: 45px; }
.m-next { left: 32px; top: 946px; width: 80px; height: 59px; }
.tag { position: absolute; color: #f00; font-weight: 700; line-height: 20px; white-space: nowrap; }
.tag.blue { color: #0066ff; }
.t-info { left: 434.500px; top: 109px; }
.t-map { left: 617.500px; top: 139px; }
.t-place { left: 45px; top: 159px; }
.t-stay { left: 45px; top: 296px; }
.t-table { left: 86px; top: 333px; }
.t-done { left: 86px; top: 546px; }
.t-next { left: 46px; top: 921px; }
</style>
